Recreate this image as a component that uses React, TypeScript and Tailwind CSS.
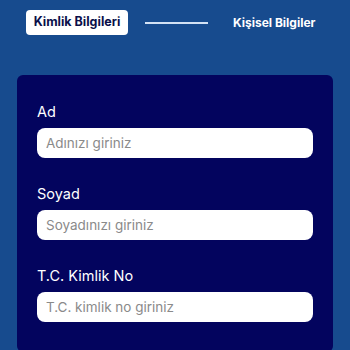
import React from "react";

function Field({ label, placeholder }: { label: string; placeholder: string }) {
  return (
    <div className="flex flex-col">
      <label className="text-[14.5px] leading-[20px] font-normal text-white">{label}</label>
      <input
        type="text"
        placeholder={placeholder}
        className="mt-[6px] h-[30px] w-full rounded-[8px] bg-white px-[9px] text-[13.5px] text-[#333] outline-none placeholder:text-[#8a8a8a]"
      />
    </div>
  );
}

export default function App() {
  return (
    <div
      className="w-[350px] h-[350px] overflow-hidden bg-[#174b8e]"
      style={{ fontFamily: "Inter, 'Noto Sans', sans-serif" }}
    >
      <div className="flex items-center h-[46px] pt-[10px] pb-[11px]">
        <div className="ml-[26px] w-[102px] h-[25px] rounded-[4px] bg-white flex items-center justify-center text-[12.5px] font-bold text-[#0a0f4a]">
          Kimlik Bilgileri
        </div>
        <div className="ml-[17px] w-[63px] h-[2px] bg-[#d3e2f5]" />
        <div className="ml-[25px] text-[12px] font-bold text-white">Kişisel Bilgiler</div>
      </div>
      <div className="mx-[17px] mt-[29px] rounded-[6px] bg-[#03045e] px-[20px] pt-[27px] pb-[30px] flex flex-col gap-[26px]">
        <Field label="Ad" placeholder="Adınızı giriniz" />
        <Field label="Soyad" placeholder="Soyadınızı giriniz" />
        <Field label="T.C. Kimlik No" placeholder="T.C. kimlik no giriniz" />
      </div>
    </div>
  );
}
